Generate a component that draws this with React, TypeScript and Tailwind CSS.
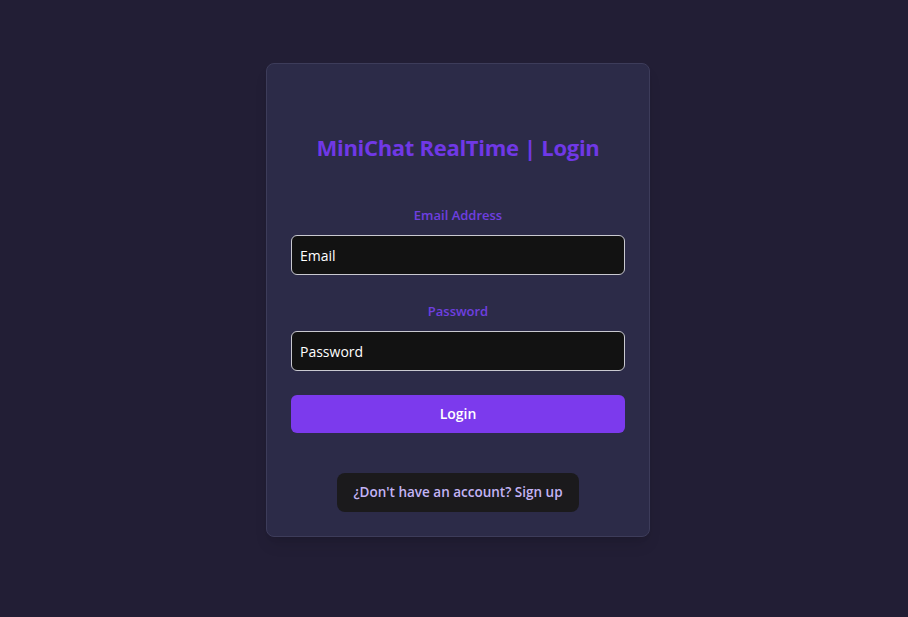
export default function App() {
  return (
    <div className="min-h-screen w-full bg-[#221e35] flex justify-center pl-2 pt-[63px] font-['Open_Sans','Noto_Sans',sans-serif]">
      <div className="w-[384px] h-[474px] bg-[#2c2b48] border border-[#3d3c5a] rounded-lg px-6 pt-[67px] flex flex-col shadow-lg">
        <h1 className="text-[22px] leading-8 font-bold text-[#7038e6] text-center tracking-[-0.3px]">
          MiniChat RealTime | Login
        </h1>

        <label className="mt-[42px] text-[13px] leading-5 font-semibold text-[#6f3fe0] text-center">
          Email Address
        </label>
        <input
          type="email"
          placeholder="Email"
          className="mt-[10px] h-10 w-full rounded-md border border-[#c9c9d0] bg-[#121212] px-2 text-sm text-white placeholder:text-white outline-none"
        />

        <label className="mt-[26px] text-[13px] leading-5 font-semibold text-[#6f3fe0] text-center">
          Password
        </label>
        <input
          type="password"
          placeholder="Password"
          className="mt-[10px] h-10 w-full rounded-md border border-[#c9c9d0] bg-[#121212] px-2 text-sm text-white placeholder:text-white outline-none"
        />

        <button className="mt-6 h-[38px] w-full rounded-md bg-[#7c3aed] text-sm font-semibold text-white">
          Login
        </button>

        <div className="mt-10 flex justify-center">
          <button className="h-[39px] w-[242px] rounded-lg bg-[#1b1a1c] text-[13.5px] font-semibold text-[#c3b4f5]">
            ¿Don't have an account? Sign up
          </button>
        </div>
      </div>
    </div>
  )
}
